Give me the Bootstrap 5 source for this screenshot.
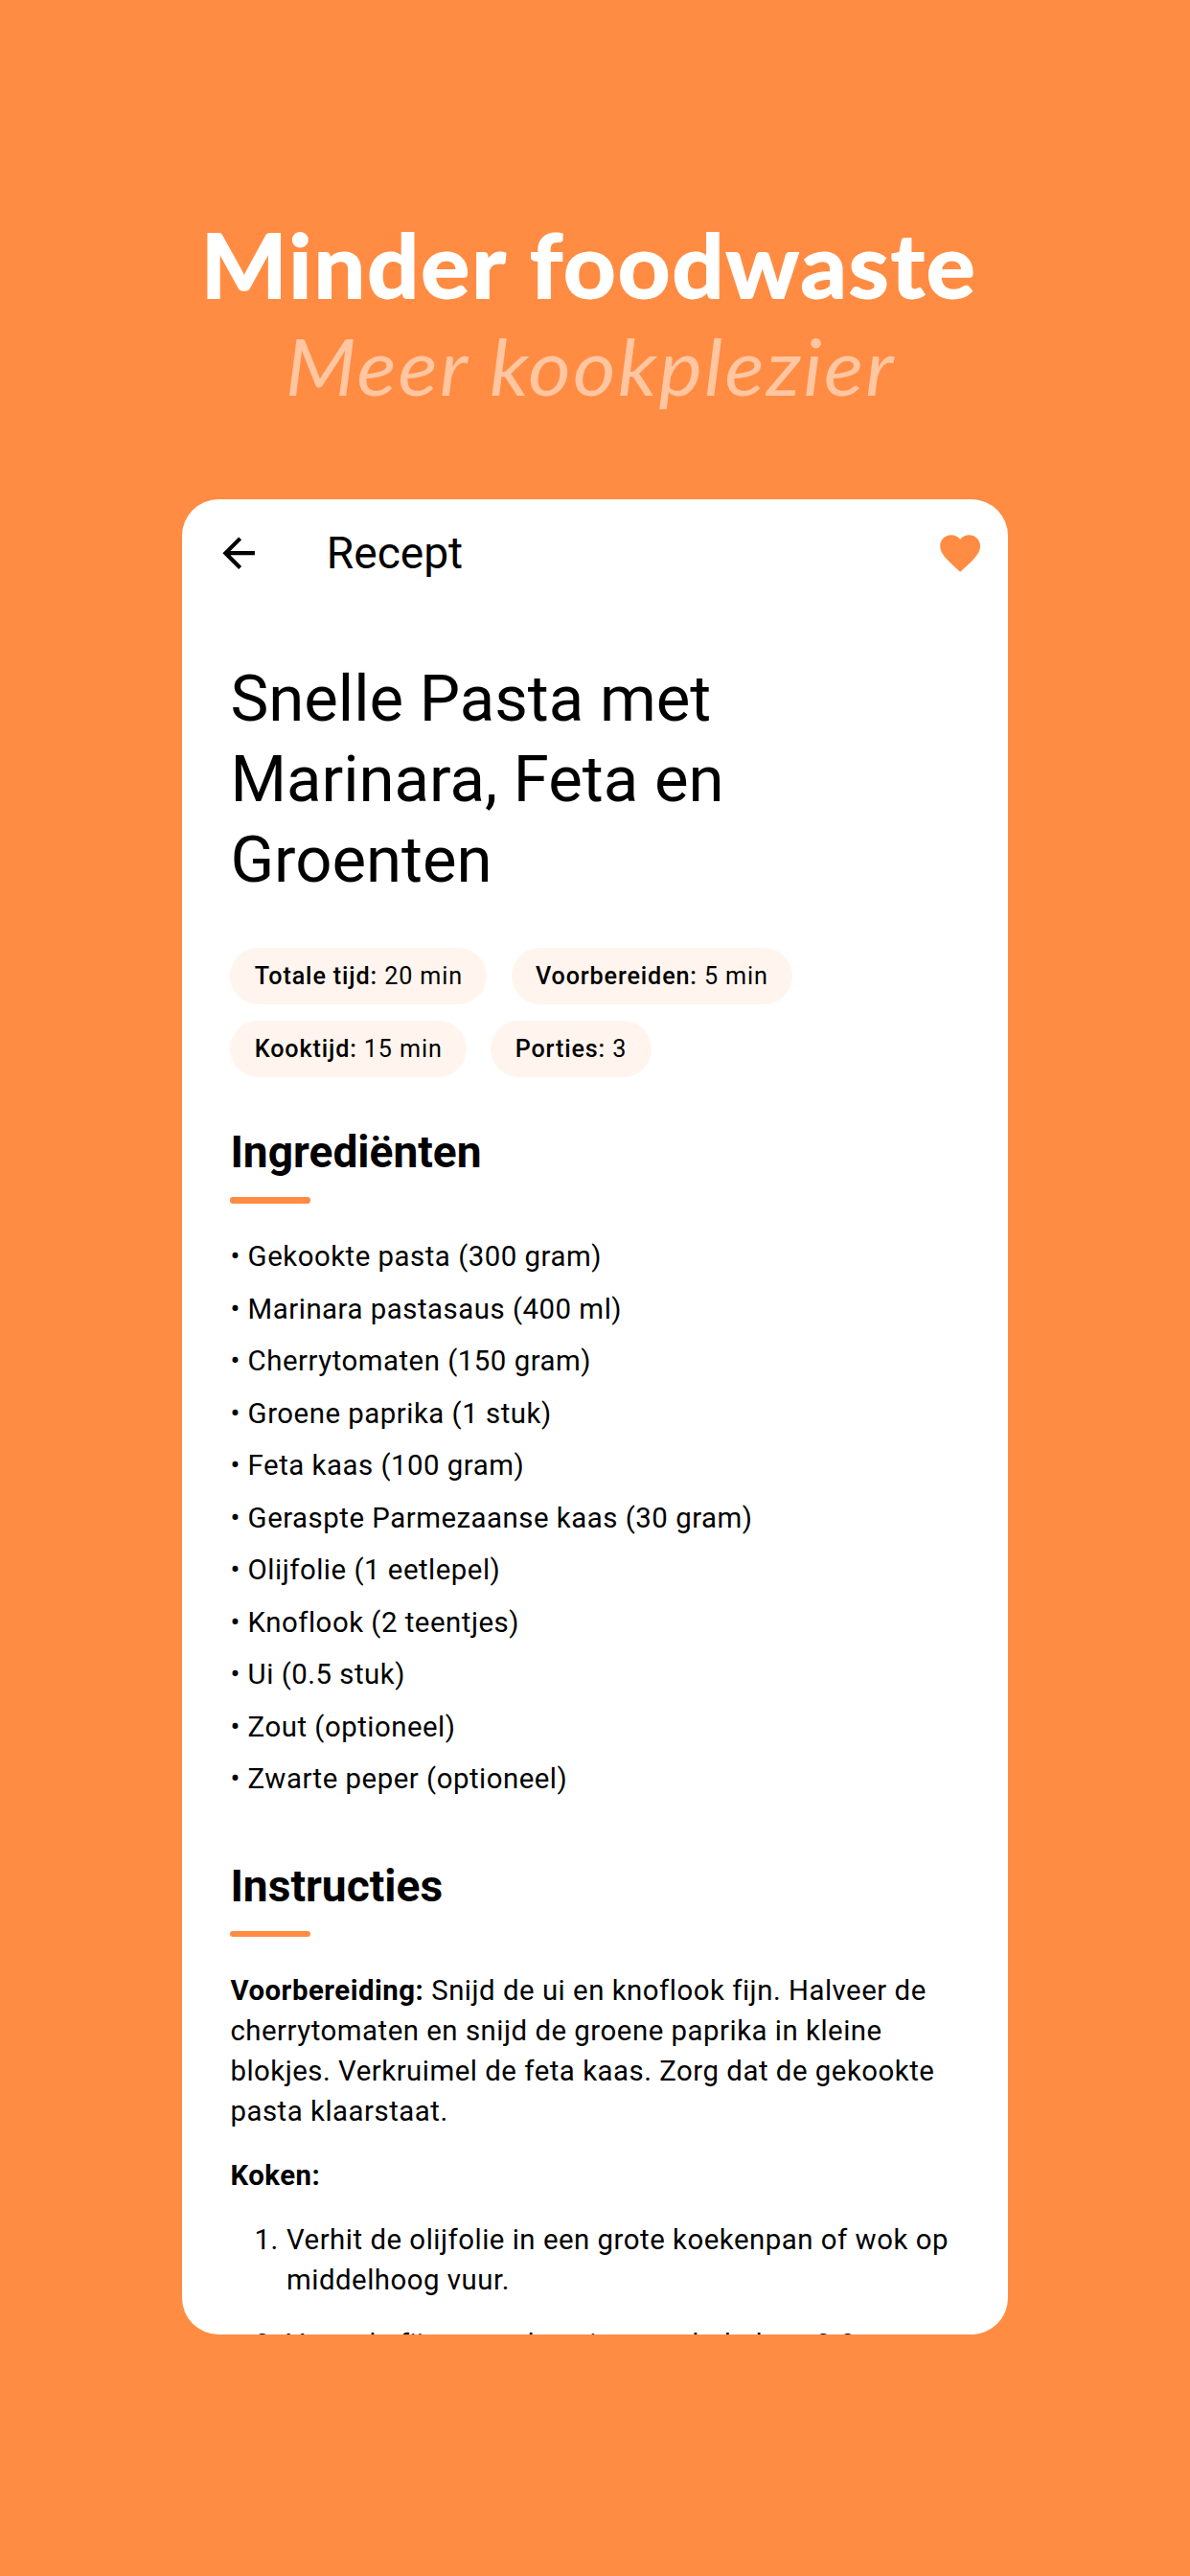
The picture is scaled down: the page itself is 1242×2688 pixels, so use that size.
<!DOCTYPE html>
<html lang="nl">
<head>
    <meta charset="UTF-8">
    <meta name="viewport" content="width=device-width, initial-scale=1.0">
    <title>Recept</title>
    <link href="https://cdn.jsdelivr.net/npm/bootstrap@5.3.0/dist/css/bootstrap.min.css" rel="stylesheet">
    <style>
        body {
            background-color: #ff8c42;
            font-family: Roboto, "Liberation Sans", sans-serif;
            color: #000;
            height: 2688px;
            overflow: hidden;
        }

        .hero {
            height: 521px;
            padding-top: 221px;
            font-family: Lato, "Liberation Sans", sans-serif;
        }

        .hero-title {
            font-size: 92px;
            line-height: 110px;
            letter-spacing: 2px;
            padding-right: 12px;
            transform: scaleX(1.035);
            -webkit-text-stroke: 1.8px #fff;
        }

        .hero-subtitle {
            font-size: 81px;
            line-height: 102px;
            letter-spacing: 2px;
            color: #ffc6a1;
            padding-right: 9px;
            transform: scaleX(1.06);
        }

        .phone {
            width: 862px;
            height: 1915px;
            border-radius: 38px;
        }

        .topbar {
            height: 113px;
            padding: 0 24.5px 0 34px;
        }

        .topbar svg {
            width: 50.3px;
            height: 50.3px;
        }

        .topbar-title {
            font-size: 46.1px;
            line-height: 58.7px;
            margin-left: 66.5px;
        }

        .recipe {
            padding: 53px 50.4px 0;
            font-size: 29.36px;
            line-height: 42px;
            letter-spacing: 0.52px;
        }

        .recipe-title {
            font-size: 67.1px;
            line-height: 84px;
            letter-spacing: 0;
            margin-bottom: 50px;
        }

        .chips {
            gap: 17px 25.2px;
            margin-bottom: 49px;
        }

        .chip {
            height: 59px;
            padding: 0 25.4px;
            background-color: #fff5ee;
            font-size: 25.16px;
            line-height: 59px;
            letter-spacing: 0.87px;
        }

        .chip b {
            font-weight: 500;
        }

        .section-title {
            font-size: 46.1px;
            line-height: 59px;
            letter-spacing: 0;
            margin-bottom: 17.4px;
        }

        .section-line {
            width: 84px;
            height: 6.3px;
            border-radius: 3.2px;
            background-color: #ff8c42;
            margin-bottom: 34.3px;
        }

        .ingredients {
            margin-bottom: 61.6px;
        }

        .ingredients li + li {
            margin-top: 12.52px;
        }

        .recipe p {
            margin-bottom: 25.2px;
        }

        .step {
            padding-left: 25px;
            margin-bottom: 25.4px;
        }

        .step-number {
            width: 33.6px;
        }
    </style>
</head>
<body>
    <header class="hero text-center">
        <h1 class="hero-title fw-bold text-white mb-0">Minder foodwaste</h1>
        <div class="hero-subtitle fst-italic">Meer kookplezier</div>
    </header>

    <main class="phone bg-white mx-auto overflow-hidden">
        <nav class="topbar d-flex align-items-center">
            <svg viewBox="0 0 24 24" fill="#000"><path d="M20 11H7.83l5.59-5.59L12 4l-8 8 8 8 1.41-1.41L7.83 13H20v-2z"/></svg>
            <span class="topbar-title">Recept</span>
            <svg class="ms-auto" viewBox="0 0 24 24" fill="#ff8c42"><path d="M12 21.35l-1.45-1.32C5.4 15.36 2 12.28 2 8.5 2 5.42 4.42 3 7.5 3c1.74 0 3.41.81 4.5 2.09C13.09 3.81 14.76 3 16.5 3 19.58 3 22 5.42 22 8.5c0 3.78-3.4 6.86-8.55 11.54L12 21.35z"/></svg>
        </nav>

        <div class="recipe">
            <h2 class="recipe-title fw-normal">Snelle Pasta met<br>Marinara, Feta en<br>Groenten</h2>

            <div class="chips d-flex flex-wrap">
                <div class="chip rounded-pill"><b>Totale tijd:</b> 20 min</div>
                <div class="chip rounded-pill"><b>Voorbereiden:</b> 5 min</div>
                <div class="chip rounded-pill"><b>Kooktijd:</b> 15 min</div>
                <div class="chip rounded-pill"><b>Porties:</b> 3</div>
            </div>

            <h3 class="section-title fw-bold">Ingrediënten</h3>
            <div class="section-line"></div>
            <ul class="ingredients list-unstyled">
                <li>• Gekookte pasta (300 gram)</li>
                <li>• Marinara pastasaus (400 ml)</li>
                <li>• Cherrytomaten (150 gram)</li>
                <li>• Groene paprika (1 stuk)</li>
                <li>• Feta kaas (100 gram)</li>
                <li>• Geraspte Parmezaanse kaas (30 gram)</li>
                <li>• Olijfolie (1 eetlepel)</li>
                <li>• Knoflook (2 teentjes)</li>
                <li>• Ui (0.5 stuk)</li>
                <li>• Zout (optioneel)</li>
                <li>• Zwarte peper (optioneel)</li>
            </ul>

            <h3 class="section-title fw-bold">Instructies</h3>
            <div class="section-line"></div>
            <p><b>Voorbereiding:</b> Snijd de ui en knoflook fijn. Halveer de cherrytomaten en snijd de groene paprika in kleine blokjes. Verkruimel de feta kaas. Zorg dat de gekookte pasta klaarstaat.</p>
            <p><b>Koken:</b></p>
            <div class="step d-flex">
                <span class="step-number flex-shrink-0">1.</span>
                <span>Verhit de olijfolie in een grote koekenpan of wok op middelhoog vuur.</span>
            </div>
            <!-- runs on below the bottom edge of the screen -->
            <div class="step d-flex">
                <span class="step-number flex-shrink-0">2.</span>
                <span>Voeg de fijngesneden ui toe en bak deze 2-3</span>
            </div>
        </div>
    </main>

    <script src="https://cdn.jsdelivr.net/npm/bootstrap@5.3.0/dist/js/bootstrap.bundle.min.js"></script>
</body>
</html>
